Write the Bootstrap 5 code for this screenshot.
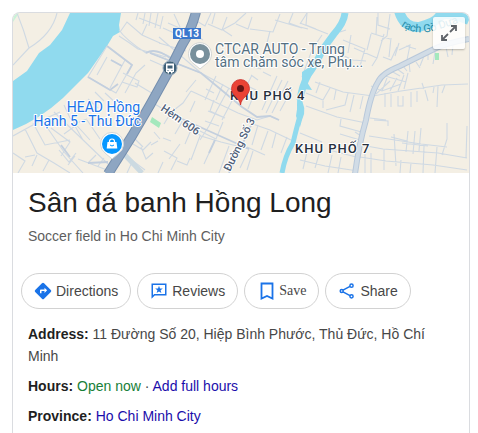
<!DOCTYPE html>
<html lang="en">
<head>
<meta charset="utf-8">
<meta name="viewport" content="width=device-width, initial-scale=1">
<title>Sân đá banh Hồng Long</title>
<link href="https://cdn.jsdelivr.net/npm/bootstrap@5.3.0/dist/css/bootstrap.min.css" rel="stylesheet">
<style>
body{font-family:"Liberation Sans",Arial,sans-serif;font-size:14px;line-height:22px;color:#474747;background:#fff}
.page{padding:12px 8px 0 12px}
.place{border:1px solid #dadce0;border-bottom:0;border-radius:8px 8px 0 0}
.map-area{height:160px;background:#f4efe4;border-radius:7px 7px 0 0}
.map-area svg.map-art{width:100%;height:100%}
.expand-btn{top:4px;right:4px;width:32px;height:32px;background:rgba(255,255,255,.85);border-radius:2px;box-shadow:0 1px 2px rgba(0,0,0,.25)}
.map-text{font-family:Roboto,sans-serif;paint-order:stroke;stroke:#fff;stroke-width:2px;stroke-linejoin:round}
.place-title{font-size:28px;line-height:36px;color:#1f1f1f;margin:0}
.place-kind{color:#5e5e5e}
.details{padding:0 15px}
.heading-block{padding:12px 15px 0}
.actions{gap:6px;padding:26px 8px 14px}
.action{height:36px;border:1px solid #d2d2d2;border-radius:18px;background:#fff;color:#474747;padding:0 12px;gap:4px;font-size:14px}
.action-save{font-family:"Liberation Serif",serif;padding-left:13px;gap:3px}
.fact{margin-bottom:8px}
.fact strong{color:#1f1f1f}
.open-now{color:#188038}
.fact a{color:#1a0dab;text-decoration:none}
.fact a:hover{text-decoration:underline}
</style>
<script src="https://cdn.jsdelivr.net/npm/bootstrap@5.3.0/dist/js/bootstrap.bundle.min.js"></script>
</head>
<body>
<main class="page d-flex flex-column min-vh-100">
<article class="place flex-grow-1">
<div class="map-area position-relative overflow-hidden">
<svg class="map-art d-block" viewBox="13 13 456 160" preserveAspectRatio="xMidYMid slice" role="img" aria-label="Map of Sân đá banh Hồng Long">
<rect x="13" y="13" width="456" height="160" fill="#f4efe4"/>
<path d="M13 13h6l-6 9z" fill="#c9f2d8"/>
<path d="M70 13 62 30 50 45 39 53 27 71 13 81V130Q40 119 63 98L88 73 107 46 113 36 120 32 119 25 121 13Z" fill="#90daee"/>
<!-- minor streets -->
<g fill="none" stroke="#cfd9e3" stroke-width="1.1">
<path d="M17 13Q24 30 29 48L13 65M29 48Q52 34 57 13M119 36Q130 43 138 49L152 53 166 57M119 30Q126 40 146 53Q155 48 172 58M107 46 132 65 116 93 88 77 107 46M97 75 107 57M111 60 122 66M125 60 110 88M123 73 139 81 137 87 122 82M125 93 136 73 145 65M135 83 160 98M138 13 136 20M145 13 143 24M151 13 149 26M158 13 155 28M163 16 160 29M139 18 160 26M120 32 127 22 142 35 160 43M142 35 147 24"/>
<path d="M13 136 42 120 60 112M25 129 37 153 54 163 70 173M42 120 64 152 83 173M54 112 108 164M64 105 70 118 90 140M33 123 45 145 70 140M13 153 25 161 18 173M25 157 35 155M51 128 70 142 61 156M64 134 75 126 83 140M74 124 87 119M87 120 100 139M88 99 98 108M95 92 104 101M105 93 117 104M59 150 69 162 76 153M68 165 75 156M32 166 37 155M43 171 49 160M78 159 107 170M88 163 96 155M98 166 104 158M130 125 140 131M133 144 143 150 151 142M141 147 146 159 153 153M125 155 145 170M133 160 127 173M143 147 135 139"/>
<path d="M150 53 201 73 232 90M159 37 201 73M150 60 175 71M159 43 186 51M168 23 191 33M163 28 190 40M174 14 180 27M186 29 203 40M190 17 205 26 211 13M208 24 222 30 227 17M215 13 212 24M222 30 235 23 246 13M223 30 232 36M236 24 248 29 252 17M250 29 273 32 280 14M270 31 267 43M275 20 302 28M293 13 289 23 300 27 308 29M300 24 307 13M191 91 215 102 238 113 257 120 270 116 279 120M229 88 217 110 209 126 200 140M234 97 222 120M214 100 210 111 225 118M208 111 225 118M205 121 219 126M200 131 216 139 223 122M191 91 183 103 174 110M186 92 196 80M195 101 190 112M206 89 214 93M216 76 205 100M223 84 216 100"/>
<path d="M150 101 171 114 201 136 221 142 249 149M170 114 164 124M182 122 175 134M191 130 185 144M151 145 158 141M164 151 177 158 171 170M154 132 160 139M163 138 171 141M169 159 180 144M177 161 187 165 190 158M163 162 158 173M200 136 191 160M215 140 204 164M229 146 219 173M249 149 240 168M247 122 270 130 291 140M258 125 252 145M268 131 261 150M276 133 272 148M287 137 281 153M253 151 247 170M247 147 265 155M262 110 277 76M266 113 282 80M272 113 288 81M280 111 292 89M248 109 256 90M251 75 258 80M245 64 261 69M239 82 256 90M252 75 244 91M263 72 271 76"/>
<path d="M300 23 328 34M307 13 306 25 316 29M322 35 312 50 302 77M340 32 346 30M343 40 365 49 360 66M342 55 353 60 366 61M351 35 348 53M354 48 377 58 372 66M367 50 371 34M377 17 376 35M378 13V25L390 29M390 14 387 36 381 41M371 33 390 39M377 58 384 34M383 57 391 60 397 47M391 38 389 57M399 50 410 45 407 60M399 43 395 56M406 46 416 49"/>
<path d="M315 82 343 92 373 96 401 91 442 85 468 84M320 82 316 93M330 88 323 100 306 93M323 101V108M336 90 334 100M348 93 345 105 326 110M354 95 350 112M363 96 360 109M306 106 337 117 366 123M341 119 340 126 365 133M355 132 361 136M374 120 388 121V126M370 118 386 120M371 86 382 91 401 84M376 94 390 81M382 91 387 78M390 91 397 78M398 91 404 75M404 89 408 73M385 93V107M391 94V107M398 96V106H403V96M411 92V107M417 91V102M425 90 428 101M434 87 433 93M438 86 437 107M422 83 424 89M445 85 442 93M385 76 406 82M391 71 400 76M397 69 404 74M403 66 407 71M409 62 410 72M416 62 420 68M424 56 420 66M428 52V60M435 52 433 64M446 47 448 57M453 44 452 55"/>
<path d="M369 136 395 140 421 144 447 147M361 145 383 149 438 153 467 158M360 157 386 161 433 165 467 170M357 162V173M365 151V173M371 153V173M384 149V170M394 134 396 166M408 131 406 152M415 131 413 154M421 128 419 151M391 137 407 141M402 143 428 146M401 160 400 173M411 163 410 173M424 146 423 173M437 147 435 173M447 123V139L442 155M467 126 466 158M340 134 360 140M329 150 360 158M300 160 325 166 358 171M307 152 303 169M320 151 315 168M332 155 328 173M341 157 338 173M300 133 322 142"/>
</g>
<g fill="none" stroke="#c3cfde" stroke-width="1.800">
<path d="M107 46 132 65 127 74M88 77 110 90 118 84M146 53Q155 47 170 58M150 53 201 73 242 107 257 117 270 116 279 120M171 114 249 149M111 60 122 66M253 121 229 173M215 140 209 153M61 145 70 157M88 163 108 162"/>
</g>
<path d="M124 154 142 173" fill="none" stroke="#ccdae1" stroke-width="5"/>
<!-- creeks -->
<g fill="none" stroke="#90daee">
<path d="M345 13Q344 23 334 34L323 49Q316 64 308 75 302 86 300 100" stroke-width="7"/>
<path d="M300 95Q299 105 300 116 297 126 293 143 285 156 282 173" stroke-width="5"/>
<path d="M311 66 302 72V89L312 90 307 82Z" fill="#90daee" stroke="none"/>
<path d="M299 96Q308 108 302 120L300 127 296 116Z" fill="#90daee" stroke="none"/>
<path d="M399 11Q404 28 419 27 435 23 439 17 445 10 469 20" stroke-width="10"/>
</g>
<!-- collector road -->
<path d="M469 39Q445 43 430 51L400 66Q382 73 378 82 371 93 366 120 359 144 355 174" fill="none" stroke="#b8c8da" stroke-width="6"/>
<path d="M469 39Q445 43 430 51L400 66Q382 73 378 82 371 93 366 120 359 144 355 174" fill="none" stroke="#d1dce6" stroke-width="4"/>
<!-- highway -->
<path d="M196 12Q191 31 182 45L170 69 150 105 132 136 108 174" fill="none" stroke="#748eae" stroke-width="10"/>
<path d="M196 12Q191 31 182 45L170 69 150 105 132 136 108 174" fill="none" stroke="#8ea6c2" stroke-width="8"/>
<path d="m152 117 9 6-2 5-9-6zM435 53h4v7h-4z" fill="#a4e8bd"/>
<!-- labels -->
<g class="map-text" font-size="14">
<g fill="#1a73e8" text-anchor="end"><text x="140" y="112">HEAD Hồng</text><text x="141" y="126">Hạnh 5 - Thủ Đức</text></g>
<g fill="#547082"><text x="215" y="54">CTCAR AUTO - Trung</text><text x="215" y="67">tâm chăm sóc xe, Phụ...</text></g>
<g fill="#28303d" font-size="13" font-weight="500" letter-spacing="1"><text x="230" y="100">KHU PHỐ 4</text><text x="295" y="153">KHU PHỐ 7</text></g>
<g fill="#4f6079" font-size="11" font-weight="500"><text transform="translate(160 110) rotate(35)">Hẻm 606</text><text transform="translate(230 172) rotate(-64)">Đường Số 3</text></g>
</g>
<path id="creek-line" d="M401 26Q412 34 428 32 442 29 460 22" fill="none"/>
<text font-family="Roboto,sans-serif" font-size="11" fill="#238caa"><textPath href="#creek-line">rạch Gò Dưa</textPath></text>
<!-- route shield -->
<rect x="173" y="28" width="28" height="11" fill="#3b78cd"/>
<text x="187" y="37" text-anchor="middle" font-family="Roboto,sans-serif" font-size="10" font-weight="700" fill="#fff">QL13</text>
<!-- bus stop -->
<circle cx="170" cy="68" r="7" fill="#3f6077" stroke="#9bafc0"/>
<path d="M166 63.5h8v8.5h-1.500v1.500h-1.500V72h-2v1.500h-1.500V72H166z" fill="#fff"/><path d="M167.500 65.500h5v3h-5zM167.500 70h1v1h-1zM171.500 70h1v1h-1z" fill="#3f6077"/>
<!-- garage marker -->
<path d="M200 69 194 64A11.500 11.500 0 1 1 206 64Z" fill="#fff" stroke="#d3d6d5"/><circle cx="200" cy="54" r="10" fill="#78909c"/><circle cx="200" cy="54" r="4" fill="#fff"/>
<!-- shop marker -->
<path d="M112 159 105 153A11.500 11.500 0 1 1 119 153Z" fill="#fff" stroke="#d3d6d5"/><circle cx="112" cy="144" r="10" fill="#0697ff"/><path d="M107.500 142h9l.8 6.500h-10.600z" fill="#fff"/><path d="M109.500 143v-1.500a2.500 2.500 0 0 1 5 0v1.500" fill="none" stroke="#fff" stroke-width="1.200"/><path d="M110 145q2 2 4 0" fill="none" stroke="#0697ff"/>
<!-- selected place pin -->
<path d="M240.500 105C239.500 97 231.500 96 231.500 88.500A9 9 0 0 1 249.500 88.500C249.500 96 241.500 97 240.500 105Z" fill="#ea4335" stroke="#c5221f" stroke-width=".7"/><circle cx="240.500" cy="88.500" r="3.500" fill="#641414"/>
</svg>
<button class="expand-btn position-absolute border-0 p-0 d-flex align-items-center justify-content-center" type="button" aria-label="Expand map">
<svg width="18" height="18" viewBox="0 0 18 18" fill="none" stroke="#5f6368" stroke-width="1.800" aria-hidden="true"><path d="M11 2h5v5M16 2l-6 6M2 11v5h5M2 16l6-6"/></svg>
</button>
</div>
<header class="heading-block">
<h1 class="place-title fw-normal">Sân đá banh Hồng Long</h1>
<div class="place-kind mt-1">Soccer field in Ho Chi Minh City</div>
</header>
<div class="actions d-flex flex-wrap">
<button class="action d-flex align-items-center" type="button"><svg width="18" height="18" viewBox="0 0 24 24" aria-hidden="true"><path fill="#1a73e8" d="m22.430 10.590-9.010-9.010a2 2 0 0 0-2.820 0l-9 9a2 2 0 0 0 0 2.820l9 9a2 2 0 0 0 2.820 0l9-9a2 2 0 0 0 .01-2.810zM14 14.500V12h-4v3H8v-4a1 1 0 0 1 1-1h5V7.500l3.500 3.500z"/></svg>Directions</button>
<button class="action d-flex align-items-center" type="button"><svg width="18" height="18" viewBox="0 0 24 24" aria-hidden="true"><path d="M3 3h18v14H6l-3 3z" fill="none" stroke="#1a73e8" stroke-width="2"/><path fill="#1a73e8" d="m12 5 1.300 3.600 3.800.1-3 2.300 1.100 3.700-3.200-2.200-3.200 2.200 1.100-3.700-3-2.300 3.800-.1z"/></svg>Reviews</button>
<button class="action action-save d-flex align-items-center" type="button"><svg width="18" height="18" viewBox="0 0 18 18" aria-hidden="true"><path d="M3.500 1.500h11v15L9 14l-5.500 2.500z" fill="none" stroke="#1a73e8" stroke-width="1.800"/></svg>Save</button>
<button class="action d-flex align-items-center" type="button"><svg width="18" height="18" viewBox="0 0 18 18" fill="none" stroke="#1a73e8" stroke-width="1.500" aria-hidden="true"><path d="m5 8.200 7-3.900M5 9.800l7 3.900"/><circle cx="3.700" cy="9" r="1.500"/><circle cx="13.500" cy="3.700" r="1.600"/><circle cx="13.500" cy="14.300" r="1.600"/></svg>Share</button>
</div>
<div class="details">
<div class="fact"><strong>Address:</strong> 11 Đường Số 20, Hiệp Bình Phước, Thủ Đức, Hồ Chí Minh</div>
<div class="fact"><strong>Hours:</strong> <span class="open-now">Open now</span> · <a href="#hours">Add full hours</a></div>
<div class="fact mb-0"><strong>Province:</strong> <a href="#province">Ho Chi Minh City</a></div>
</div>
</article>
</main>
</body>
</html>
